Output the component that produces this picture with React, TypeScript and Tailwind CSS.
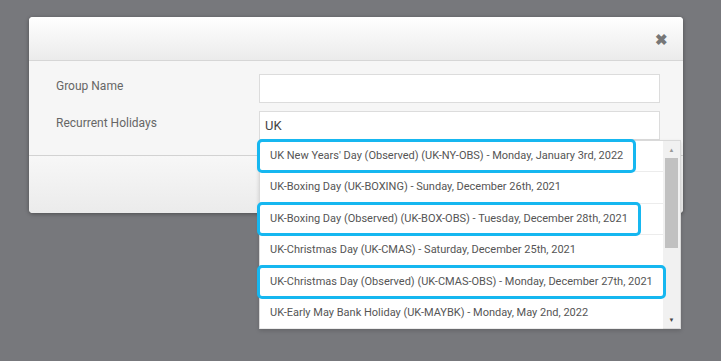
import React from "react";

const items = [
  { text: "UK New Years' Day (Observed) (UK-NY-OBS) - Monday, January 3rd, 2022", mark: true },
  { text: "UK-Boxing Day (UK-BOXING) - Sunday, December 26th, 2021", mark: false },
  { text: "UK-Boxing Day (Observed) (UK-BOX-OBS) - Tuesday, December 28th, 2021", mark: true },
  { text: "UK-Christmas Day (UK-CMAS) - Saturday, December 25th, 2021", mark: false },
  { text: "UK-Christmas Day (Observed) (UK-CMAS-OBS) - Monday, December 27th, 2021", mark: true },
  { text: "UK-Early May Bank Holiday (UK-MAYBK) - Monday, May 2nd, 2022", mark: false },
];

export default function App() {
  return (
    <div
      className="w-[721px] h-[361px] overflow-hidden bg-[#77787c] pt-[17px] pl-[29px]"
      style={{ fontFamily: "Roboto, 'Liberation Sans', sans-serif" }}
    >
      <div className="relative w-[654px] rounded-[4px] bg-[#f6f6f6] shadow-[0_1px_4px_rgba(0,0,0,0.35)]">
        {/* header */}
        <div className="h-[44px] rounded-t-[4px] border-b border-[#d6d6d6] bg-gradient-to-b from-[#ffffff] to-[#ebebeb] flex items-center justify-end pr-[15px]">
          <span className="text-[15px] font-bold text-[#777] leading-none mt-[4px]">✖</span>
        </div>

        {/* body */}
        <div className="pt-[13px] pb-[15px] pl-[27px] pr-[23px] flex flex-col gap-[8px] border-b border-[#d2d2d2]">
          <div className="flex items-center">
            <div className="w-[203px] text-[12px] text-[#666] -mt-[6px]">Group Name</div>
            <div className="flex-1 h-[29px] bg-white border border-[#dcdcdc]" />
          </div>
          <div className="flex items-center">
            <div className="w-[203px] text-[12px] text-[#666] -mt-[6px]">Recurrent Holidays</div>
            <div className="flex-1 h-[29px] bg-white border border-[#dcdcdc] flex items-center pl-[5px] text-[13px] text-[#444]">
              UK
            </div>
          </div>
        </div>

        {/* footer */}
        <div className="h-[57px] rounded-b-[4px] bg-gradient-to-b from-[#f7f7f7] to-[#ebebeb]" />

        {/* dropdown */}
        <div className="absolute left-[230px] top-[123px] w-[422px] h-[189px] bg-white border border-[#d9d9d9] shadow-[0_2px_4px_rgba(0,0,0,0.15)] flex">
          <div className="flex-1 flex flex-col">
            {items.map((it, i) => (
              <div
                key={i}
                className="h-[31.4px] shrink-0 flex items-center pl-[10px] text-[11px] text-[#555] border-b border-[#ececec] whitespace-nowrap"
              >
                <span className="relative">
                  {it.mark && (
                    <span className="absolute -left-[13px] -right-[13px] -top-[9px] -bottom-[9px] border-[3px] border-[#16b7f0] rounded-[5px]" />
                  )}
                  {it.text}
                </span>
              </div>
            ))}
          </div>
          <div className="w-[17px] bg-[#f1f1f1] flex flex-col items-center">
            <div className="h-[17px] flex items-center justify-center text-[6px] text-[#999]">▲</div>
            <div className="w-[13px] h-[90px] bg-[#c1c1c1]" />
            <div className="flex-1" />
            <div className="h-[17px] flex items-center justify-center text-[6px] text-[#444]">▼</div>
          </div>
        </div>
      </div>
    </div>
  );
}
